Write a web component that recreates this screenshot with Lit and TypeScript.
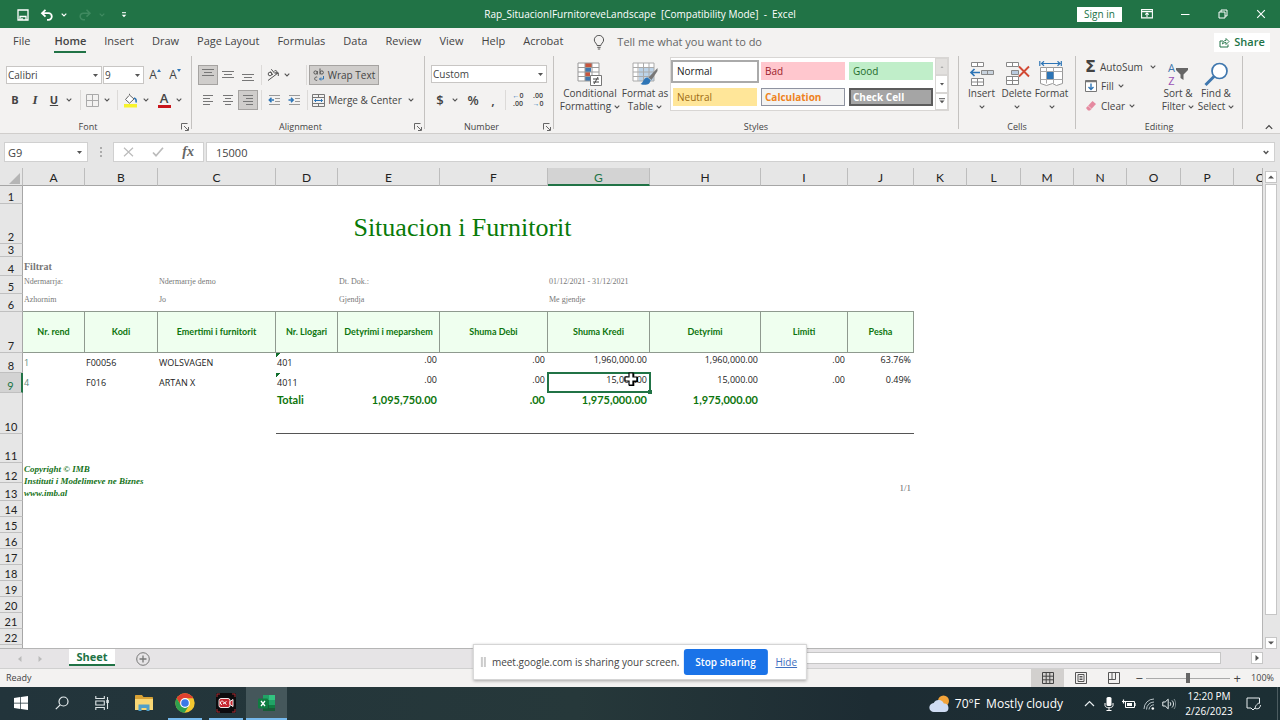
import { LitElement, html, svg, css, nothing } from "lit";
import { customElement, state } from "lit/decorators.js";
import { classMap } from "lit/directives/class-map.js";

const icon = (w: number, h: number, body: unknown) => html`
  <svg width=${w} height=${h} viewBox="0 0 ${w} ${h}" fill="none" aria-hidden="true">${body}</svg>`;

const chevron = () => icon(6, 4, svg`<path d="M.7 .7 3 3 5.3 .7" stroke="#555" stroke-width="1.1"/>`);
const caret = () => icon(5, 3, svg`<path d="M0 0h5L2.5 3z" fill="#555"/>`);

const lines = (rows: [number, number, number][], color = "#777") =>
  icon(14, 14, rows.map(([x, y, w]) => svg`<path d="M${x} ${y}.5h${w}" stroke=${color}/>`));

const launcher = () => icon(8, 8, svg`<path d="M.5 6.500V.5H6.500M3 3l4 4M7.500 4v3.500H4" stroke="#666"/>`);

const I = {
  save: () => icon(12, 12, svg`<path d="M1 1h10v10H1z" stroke="#fff" stroke-width="1.300"/><path d="M3 11V7.500h6V11M5 9v2" stroke="#fff" stroke-width="1.300"/>`),
  undo: () => icon(14, 12, svg`<path d="M5.500 .8 2 4.200l3.500 3.400M2.200 4.200H8.500a3.300 3.300 0 0 1 0 6.600H7" stroke="#fff" stroke-width="1.800"/>`),
  redo: () => icon(14, 12, svg`<path d="M8.500 .8 12 4.200 8.500 7.600M11.800 4.200H5.500a3.300 3.300 0 0 0 0 6.600H7" stroke="#3f8a60" stroke-width="1.500"/>`),
  whiteChevron: (c: string) => icon(6, 4, svg`<path d="M.7 .7 3 3 5.300 .7" stroke=${c} stroke-width="1.200"/>`),
  customize: () => icon(6, 6, svg`<path d="M1 .7h4" stroke="#fff"/><path d="M.7 2.800h4.600L3 5.300z" fill="#fff"/>`),
  ribbonMode: () => icon(12, 10, svg`<path d="M.6 .6h10.800v8.300H.6zM.6 2.600h10.800" stroke="#fff" stroke-width="1.100"/><path d="M6 8V4M4.200 5.600 6 3.900l1.800 1.700" stroke="#fff" stroke-width="1.100"/>`),
  minimize: () => icon(10, 10, svg`<path d="M1 5.500h8.500" stroke="#fff"/>`),
  restore: () => icon(10, 10, svg`<path d="M1 3h6v6H1z" stroke="#fff"/><path d="M3 3V1h6v6H7" stroke="#fff"/>`),
  close: () => icon(10, 10, svg`<path d="m1.200 1.200 7.600 7.600m0-7.600L1.200 8.800" stroke="#fff" stroke-width="1.100"/>`),
  bulb: () => icon(12, 15, svg`<path d="M4 10.500c0-2-2.700-2.800-2.700-5.500a4.600 4.600 0 0 1 9.300 0c0 2.700-2.700 3.500-2.700 5.500zM4.300 12.300h3.400M4.800 14h2.400" stroke="#555"/>`),
  share: () => icon(11, 11, svg`<path d="M4 4H1v6h8V7.500" stroke="#217346"/><path d="M3.500 7C3.800 4.500 5 3.500 7 3.500V1.500l3 3-3 3V5.500C5.500 5.500 4.500 6 3.500 7z" stroke="#217346" stroke-width=".9"/>`),
  border: () => icon(13, 13, svg`<path d="M.5 .5h12v12H.5zM6.500 .5v12M.5 6.500h12" stroke="#aaa"/>`),
  fillColor: () => icon(15, 15, svg`<path d="M6 2.500 2.500 6.500l4 3.700 4.500-4.200-4.500-4V.8" stroke="#666" fill="#fff"/><path d="M11 5c2 .5 2.500 2 2 4.500" stroke="#2e75b6" stroke-width="1.600"/><path d="M1 11h13v3.500H1z" fill="#f7f32c"/>`),
  orient: () => icon(14, 14, svg`<g stroke="#555"><circle cx="4" cy="6" r="1.800"/><path d="m4.500 3.500 2.200 3.500M5.300 1.200l3.500 4.300M8 3.600a1.600 1.600 0 1 1 1.500 2.200M2 12.500 12 5M12.300 8V4.800H9"/></g>`),
  wrap: () => icon(12, 14, svg`<g stroke="#555"><circle cx="2.500" cy="4.500" r="1.600"/><path d="M4.300 3v3.500M7 .5v6M4.200 9.200a1.700 1.700 0 1 0 0 3"/><circle cx="8.800" cy="4.500" r="1.600"/></g><path d="M10.500 8v3H6.500M8 9.500 6.500 11 8 12.500" stroke="#2e75b6"/>`),
  merge: () => icon(13, 13, svg`<path d="M.5 .5h12v12H.5zM.5 3.500h12M.5 9.500h12M6.500 .5v3M6.500 9.500v3" stroke="#777"/><path d="M2.500 6.500h8M4 5 2.500 6.500 4 8M9 5l1.500 1.500L9 8" stroke="#2e75b6"/>`),
  indent: (dir: number) => icon(13, 12, svg`<path d="M1 1.500h11M7 4.500h5M7 7.500h5M1 10.500h11" stroke="#999"/><path d=${dir < 0 ? "M6 6H1.500M3.500 3.800 1.300 6l2.200 2.200" : "M.5 6H5M3 3.800 5.200 6 3 8.200"} stroke="#2e75b6" stroke-width="1.500"/>`),
  cond: () => icon(26, 25, svg`<path d="M1 1h21v18H1z" fill="#fff"/><path d="M8 1h7v4.500H8z" fill="#c8553d"/><path d="M8 5.500h6V10H8z" fill="#3f77ae"/><path d="M8 10h5v4.500H8z" fill="#c8553d"/><path d="M8 14.500h5V19H8z" fill="#3f77ae"/><path d="M1 1h21v18H1zM1 5.500h21M1 10h21M1 14.500h21M8 1v18M15 1v18" stroke="#999"/><path d="M13.500 13.500h11v10h-11z" fill="#fff" stroke="#777"/><path d="M16 17h6M16 20h6M21 15l-4 7" stroke="#444"/>`),
  table: () => icon(27, 25, svg`<path d="M1 1h21v18H1z" fill="#fff"/><path d="M7 6h15v13H7z" fill="#bcd3e8"/><path d="M1 1h21v18H1zM1 5.500h21M1 10h21M1 14.500h21M6 1v18M11.500 1v18M17 1v18" stroke="#aaa"/><path d="m25.500 6-9 9.500 3 2.500 6-9z" fill="#777"/><path d="M15.500 15.500c-4 0-3.500 4.500-7 6.500 5 2 10 .5 10-4z" fill="#2e75b6"/>`),
  insert: () => icon(26, 26, svg`<g stroke="#888" fill="#fff"><path d="M2.500 1.500h12v4h-12zM8.500 1.500v4M2.500 17.500h12v7h-12zM8.500 17.500v7M2.500 21h12"/><path d="M12.500 9.500h12v4h-12zM18.500 9.500v4" fill="#c9d3dd"/></g><path d="M11 11.500H2M5.500 8 2 11.500 5.500 15" stroke="#2e75b6" stroke-width="1.700"/>`),
  remove: () => icon(26, 26, svg`<g stroke="#888" fill="#fff"><path d="M2.500 1.500h12v4h-12zM8.500 1.500v4M2.500 15.500h12v8h-12zM8.500 15.500v8M2.500 19.500h12"/><path d="M7.500 9.500h7v4h-7z" fill="#b9cbe0"/></g><path d="m15 5.500 10 10M25 5.500l-10 10" stroke="#d24a35" stroke-width="1.900"/>`),
  format: () => icon(26, 26, svg`<path d="M2 2.500h19M5 .3 2.500 2.500 5 4.700M18.500 .3 21 2.500l-2.500 2.200M.8 0v5M22.300 0v5" stroke="#2e75b6" stroke-width="1.200"/><path d="M1.500 6.500h22v16l-6 2-4-2-6 2-6-2z" fill="#fff" stroke="#999"/><path d="M1.500 10.500h22M1.500 18.500h22M7.500 6.500v16M14.500 6.500v16" stroke="#aaa"/><path d="M8 11h6.500v7H8z" fill="#2e75b6"/>`),
  fillDown: () => icon(12, 12, svg`<path d="M.5 .5h11v11H.5z" fill="#fff" stroke="#777"/><path d="M.5 1.500h11" stroke="#777" stroke-width="1.500"/><path d="M6 3.500v6M3.500 7 6 9.500 8.500 7" stroke="#2e75b6" stroke-width="1.400"/>`),
  eraser: () => icon(12, 12, svg`<path d="m1 8 6.500-7L11 4 5 10.500H3z" fill="#e58aa0"/><path d="m3 5.800 3.800 3.300" stroke="#f5c5d0"/>`),
  funnel: () => icon(12, 13, svg`<path d="M0 0h12v2L7.500 6.500V12l-3-2V6.500L0 2z" fill="#666"/>`),
  magnifier: () => icon(25, 25, svg`<circle cx="15.500" cy="9" r="7.500" fill="#fff" stroke="#3f77ae" stroke-width="1.700"/><path d="m10 14.500-8.500 8.500" stroke="#3f77ae" stroke-width="3"/>`),
  collapse: () => icon(8, 6, svg`<path d="m.8 4.800 3.200-3.300 3.200 3.300" stroke="#444" stroke-width="1.200"/>`),
  cancel: () => icon(11, 10, svg`<path d="m1 .8 9 8.400M10 .8 1 9.200" stroke="#bbb" stroke-width="1.200"/>`),
  confirm: () => icon(12, 10, svg`<path d="m1 5.500 3 3.200L11 .8" stroke="#bbb" stroke-width="1.700"/>`),
  dots: () => icon(2, 10, svg`<path d="M0 1h2M0 5h2M0 9h2" stroke="#999" stroke-width="1.500"/>`),
  corner: () => icon(11, 11, svg`<path d="M11 0v11H0z" fill="#b5b5b5"/>`),
  plusCircle: () => icon(14, 14, svg`<circle cx="7" cy="7" r="6.300" stroke="#777"/><path d="M7 3.500v7M3.500 7h7" stroke="#777" stroke-width="1.300"/>`),
  tri: (d: string, c = "#555") => icon(6, 6, svg`<path d=${d} fill=${c}/>`),
  viewNormal: () => icon(12, 12, svg`<path d="M.5 .5h11v11H.5zM.5 4.200h11M.5 7.800h11M4.200 .5v11M7.800 .5v11" stroke="#444"/>`),
  viewPage: () => icon(12, 12, svg`<path d="M.5 .5h11v11H.5zM3 2.500h6v7H3zM4.500 4.500h3M4.500 6h3M4.500 7.500h3" stroke="#555"/>`),
  viewBreak: () => icon(12, 12, svg`<path d="M.5 11.500V.5h11v11zM.5 7.500h7v-7M4 .5v7" stroke="#555"/>`),
  windows: () => icon(14, 14, svg`<path d="m0 2 6.300-.9v5.600H0zM7 1l7-1v6.700H7zM0 7.400h6.300V13L0 12.100zM7 7.400h7V14l-7-1z" fill="#fff"/>`),
  search: () => icon(14, 14, svg`<circle cx="8.500" cy="5.500" r="4.500" stroke="#e8eef0" stroke-width="1.200"/><path d="M5.200 8.800.8 13.200" stroke="#e8eef0" stroke-width="1.200"/>`),
  taskView: () => icon(15, 14, svg`<path d="M.8 0v2.500h8.500V0M.8 5h8.500v4H.8zM.8 14v-2.500h8.500V14M12.500 1v12" stroke="#dfe6e8" stroke-width="1.100"/><path d="M11.300 4h2.500v3h-2.500z" fill="#dfe6e8"/>`),
  folder: () => icon(20, 18, svg`<path d="M1 2c0-.6.400-1 1-1h6l1.500 2H18c.6 0 1 .4 1 1v12H1z" fill="#d9a336"/><path d="M1 5h18v11H1z" fill="#f8d775"/><path d="M4.500 17v-6.500h11V17h-3v-3h-5v3z" fill="#4f9fc9"/>`),
  chrome: () => icon(20, 20, svg`<circle cx="10" cy="10" r="9.700" fill="#f3c730"/><path d="M1.600 5.200A9.700 9.700 0 0 1 18.400 5.200H10L6 12.500z" fill="#e0402f"/><path d="M1.600 5.200A9.700 9.700 0 0 0 9.500 19.700L14 12.500 6 12.500z" fill="#2fa04f"/><circle cx="10" cy="10" r="4.900" fill="#fff"/><circle cx="10" cy="10" r="3.800" fill="#3b78e7"/>`),
  recorder: () => icon(20, 20, svg`<rect width="20" height="20" rx="2" fill="#0d0b0d"/><path d="M1 4V1h3M16 1h3v3M19 16v3h-3M4 19H1v-3" stroke="#a92d33"/><rect x="3" y="5.500" width="11" height="9" rx="2" fill="#c7262f" stroke="#fff" stroke-width=".9"/><path d="m14 8.500 3-2v7l-3-2z" fill="#c7262f" stroke="#fff" stroke-width=".9"/><path d="M6 11.500a1.700 1.700 0 1 1 1.500-2.500l3 2.500M7 11l3.500-2.500" stroke="#fff"/>`),
  excel: () => icon(18, 18, svg`<path d="M5 1h12v16H5z" fill="#21a366"/><path d="M11 1h6v5h-6z" fill="#33c481"/><path d="M5 6h6v5H5z" fill="#107c41"/><path d="M5 11h12v6H5z" fill="#185c37"/><path d="M11 11h6v3h-6z" fill="#107c41"/><rect y="4.500" width="10" height="10" rx="1" fill="#107c41"/><path d="m3 7 4 5M7 7l-4 5" stroke="#fff" stroke-width="1.300"/>`),
  cloud: () => icon(22, 18, svg`<circle cx="14.500" cy="6" r="5.500" fill="#f2a33a"/><path d="M5 17a4.500 4.500 0 0 1-.3-9A5.500 5.500 0 0 1 14.800 8.500 4.300 4.300 0 0 1 16 17z" fill="#cfdcf3"/>`),
  up: () => icon(11, 7, svg`<path d="m1 6 4.500-4.500L10 6" stroke="#e8eef0" stroke-width="1.200"/>`),
  mic: () => icon(10, 14, svg`<rect x="2.500" width="5" height="9" rx="1.500" fill="#fff"/><path d="M1 6v2.500c0 3 8 3 8 0V6M5 11v2.500M2.500 13.500h5" stroke="#fff"/>`),
  battery: () => icon(14, 10, svg`<path d="M3.500 2.500h9v6h-9z" stroke="#fff"/><path d="M5 4h5v3H5z" fill="#fff"/><path d="M13 4v3M0 2.500h4M1.500 .5v4" stroke="#fff" stroke-width="1.200"/>`),
  wifi: () => icon(12, 12, svg`<path d="M1 11A10 10 0 0 1 11 1M3.500 11.500A7.500 7.500 0 0 1 11 4M6 11.500A5 5 0 0 1 11 6.800" stroke="#b9c4c8"/><circle cx="9.800" cy="10.500" r="1.300" fill="#fff"/>`),
  volume: () => icon(14, 12, svg`<path d="M.8 4h2.400L6.200 1.200v9.600L3.200 8H.8z" stroke="#e8eef0"/><path d="M8 4.200c1 1 1 2.600 0 3.600M10 2.500c2 2 2 5 0 7" stroke="#e8eef0"/><path d="M12 1c2.200 3 2.200 7 0 10" stroke="#7f8d91"/>`),
  notif: () => icon(15, 14, svg`<path d="M1 1h12.500v10H9l-2 2-2-2H1z" stroke="#e8eef0"/><path d="M13 6c-2 1-4.500 3.500-3.500 5.500 2.500 1 5-1 5-3.500" stroke="#e8eef0" fill="#1e3035"/>`),
  cursor: () => icon(14, 14, svg`<path d="M5 1h4v4h4v4H9v4H5V9H1V5h4z" fill="#fff" stroke="#000" stroke-width="1.200"/><path d="M9.600 1.500v3.200M13.400 5v4.600H9.600v4H5" stroke="#000" stroke-width="1.400"/>`),
};

const COLS: [string, number][] = [
  ["A", 62], ["B", 73], ["C", 118], ["D", 62], ["E", 102], ["F", 108], ["G", 102], ["H", 111], ["I", 87],
  ["J", 66], ["K", 53], ["L", 54], ["M", 53], ["N", 53], ["O", 54], ["P", 53], ["Q", 54],
];
const HEIGHTS = [18, 40, 13, 19, 18, 18, 41, 20, 20, 41, 29, 20, 18, 16, 16, 16, 16, 16, 16, 16, 16, 16];

interface Cell { t?: unknown; k?: string; span?: number; rows?: number; }
const heads = ["Nr. rend", "Kodi", "Emertimi i furnitorit", "Nr. Llogari", "Detyrimi i meparshem",
  "Shuma Debi", "Shuma Kredi", "Detyrimi", "Limiti", "Pesha"];
const num = (t: string): Cell => ({ t, k: "num" });
const txt = (t: string, k = "txt"): Cell => ({ t, k });
const blank = (n: number, k = ""): Cell => ({ span: n, k });

const ROWS: Record<number, Cell[]> = {
  2: [{ t: "Situacion i Furnitorit", k: "title", span: 10 }, blank(7)],
  4: [txt("Filtrat", "filter-head"), blank(16)],
  5: [txt("Ndermarrja:", "filter"), blank(1), txt("Ndermarrje demo", "filter"), blank(1), txt("Dt. Dok.:", "filter"),
    blank(1), { t: "01/12/2021 - 31/12/2021", k: "filter", span: 2 }, blank(9)],
  6: [txt("Azhornim", "filter"), blank(1), txt("Jo", "filter"), blank(1), txt("Gjendja", "filter"), blank(1),
    txt("Me gjendje", "filter"), blank(10)],
  7: [...heads.map((t) => ({ t, k: "head" })), blank(7)],
  8: [txt("1", "txt idx"), txt("F00056"), txt("WOLSVAGEN"), txt("401", "txt flag"), num(".00"), num(".00"),
    num("1,960,000.00"), num("1,960,000.00"), num(".00"), num("63.76%"), blank(7)],
  9: [txt("4", "txt idx"), txt("F016"), txt("ARTAN X"), txt("4011", "txt flag"), num(".00"), num(".00"),
    { t: "15,000.00", k: "num active" }, num("15,000.00"), num(".00"), num("0.49%"), blank(7)],
  10: [blank(3), txt("Totali", "total first"), txt("1,095,750.00", "total"), txt(".00", "total"), txt("1,975,000.00", "total"),
    txt("1,975,000.00", "total"), blank(2, "rule"), blank(7)],
  12: [{ t: html`Copyright © IMB<br />Instituti i Modelimeve ne Biznes<br />www.imb.al`, k: "copy", span: 3, rows: 2 }, blank(14)],
  13: [blank(6), txt("1/1", "page"), blank(7)],
};

@customElement("app-root")
export class AppRoot extends LitElement {
  @state() private sharing = true;

  static styles = css`
    :host { display: grid; grid-template-rows: auto auto auto auto minmax(0, 1fr) auto auto auto; height: 100vh; min-width: 0;
      position: relative; overflow: hidden; background: #e6e6e6; color: #444; font: 11px/14px "Open Sans", "Noto Sans", sans-serif; }
    * { box-sizing: border-box; }
    svg { display: block; flex: none; }
    button, input, select { font: inherit; color: inherit; border: 0; background: none; padding: 0; margin: 0; border-radius: 0; }
    button { display: flex; align-items: center; justify-content: center; white-space: nowrap; }
    a { color: inherit; text-decoration: none; }

    .title-bar { display: grid; grid-template-columns: 1fr auto 1fr; align-items: center; height: 28px; background: #217346; color: #fff; font-size: 10px; }
    .quick { display: flex; align-items: center; gap: 7px; padding: 2px 0 0 17px; }
    .quick .wide { margin-left: 4px; }
    .quick .far { margin-left: 9px; }
    .doc-name { white-space: pre; line-height: 12px; }
    .window-controls { display: flex; justify-content: flex-end; align-items: center; }
    .window-controls button { width: 38px; height: 28px; }
    .window-controls .sign-in { width: 45px; height: 15px; background: #fff; color: #217346; margin-right: 6px; }

    .tabs { display: flex; align-items: center; height: 28px; background: #f3f2f1; padding: 0 10px 0 13px; font-size: 11px; }
    .tabs a { height: 22px; line-height: 20px; margin-right: 18px; }
    .tabs a:first-child { margin-right: 24px; }
    .tabs .home { font-weight: 600; border-bottom: 2px solid #217346; }
    .tell { display: flex; align-items: center; gap: 12px; margin-left: 12px; line-height: 20px; color: #666; }
    .share { margin-left: auto; background: #fff; color: #217346; font-weight: 600; height: 19px; width: 56px; gap: 4px; }

    .ribbon { display: grid; grid-template-columns: 192px 233px 129px minmax(0, 1fr) 117px 167px 37px; height: 78px; background: #f3f2f1;
      border-bottom: 1px solid #d0cecc; font-size: 10px; }
    .group { position: relative; display: grid; grid-template-rows: minmax(0, 1fr) 13px; padding: 1px 1px 0 0;
      background: linear-gradient(#c4c2c0, #c4c2c0) right top / 1px 73px no-repeat; }
    .group-label { text-align: center; font-size: 9px; line-height: 14px; }
    .with-launch .group-label { padding-right: 15px; }
    .launch { position: absolute; right: 3px; bottom: 2px; width: 9px; height: 9px; }
    .two-rows { display: grid; grid-template-rows: 18px 20px; row-gap: 7px; padding: 8px 0 0 6px; align-content: start; }
    .row { display: grid; align-items: center; justify-items: center; }
    .font-top { grid-template-columns: 96px 41px 20px 18px; column-gap: 1px; }
    .font-bottom { grid-template-columns: 18px 22px 16px 14px 8px 16px 14px 6px 20px 12px 24px 6px; }
    .align-top { grid-template-columns: 20px 20px 20px 6px 18px 10px 11px 6px 70px; }
    .align-bottom { grid-template-columns: 20px 20px 20px 6px 20px 20px 6px 94px 14px; }
    .number-bottom { grid-template-columns: 18px 12px 24px 16px 8px 18px 22px; }
    .row button { min-width: 100%; height: 20px; }
    .row .pressed { background: #cfcdcb; border: 1px solid #a5a3a1; }
    .sep { width: 1px; height: 20px; background: #dcdad8; }
    .combo { position: relative; display: block; width: 100%; height: 18px; background: #fff; border: 1px solid #c8c6c4; }
    .combo select { appearance: none; width: 100%; height: 16px; padding-left: 1px; line-height: 16px; outline: 0; }
    .combo svg { position: absolute; right: 3px; top: 7px; pointer-events: none; }
    .number-top { width: 116px; }
    .glyph { font-size: 13px; font-weight: 600; }
    .bold { font-size: 11px; font-weight: 700; } .ital { font: italic 700 13px "Liberation Serif", serif; } .under { text-decoration: underline; }
    .font-step { align-items: flex-start; font-size: 12px; line-height: 20px; }
    .font-step svg { margin-top: 4px; }
    .font-color { flex-direction: column; font-weight: 600; font-size: 13px; line-height: 11px; }
    .font-color i { width: 13px; height: 3px; background: #c9141b; margin-top: 1px; }
    .text-button { gap: 3px; }
    .decimals { flex-direction: column; font-size: 7px; line-height: 8px; font-weight: 600; }
    .decimals b { color: #2e75b6; }

    .styles { display: grid; grid-template-columns: 60px 50px auto; padding: 0 0 0 6px; justify-content: start; }
    .big { flex-direction: column; justify-content: flex-start; line-height: 13px; padding-top: 4px; }
    .big .glyph-box { height: 26px; display: flex; align-items: center; justify-content: center; gap: 1px; }
    .big .cap { display: flex; align-items: center; gap: 3px; }
    .big .solo { height: 13px; }
    .gallery { display: grid; grid-template-columns: 88px 88px 88px 13px; grid-template-rows: 26px 26px; background: #fff; border: 1px solid #d8d6d4; height: 54px; }
    .gallery .style { width: 84px; height: 18px; justify-self: center; align-self: center; justify-content: flex-start; padding-left: 4px; }
    .gallery .normal { width: 88px; height: 23px; color: #222; border: 2px solid #aaa; }
    .bad { background: #ffc7ce; color: #9c1c2c; } .good { background: #c0eec9; color: #1f6b2b; }
    .neutral { background: #ffe699; color: #9c6a12; }
    .gallery .calc { background: #f2f2f2; border: 1px solid #8f93a0; color: #ee8322; font-weight: 700; padding-left: 3px; }
    .gallery .check { background: #a5a5a5; border: 2px solid #5c5c5c; color: #fff; font-weight: 700; padding-left: 2px; }
    .spin { grid-column: 4; grid-row: 1 / 3; display: grid; grid-template-rows: 1fr 1fr 1fr; }
    .spin button { border: 1px solid #d8d6d4; width: 13px; }
    .spin .off { background: #e2e0de; }

    .cells { display: grid; grid-template-columns: 35px 35px 35px; padding-left: 5px; }
    .editing { display: grid; grid-template-columns: 74px 38px 38px; padding-left: 9px; }
    .edit-list { display: grid; grid-template-rows: 19px 20px 19px; justify-items: start; }
    .edit-list button { gap: 4px; }
    .edit-list .sum { width: 71px; justify-content: flex-start; }
    .edit-list .sum svg { margin-left: auto; }
    .edit-list .sigma { font: 700 16px/16px "DejaVu Sans", sans-serif; }
    .az { display: flex; flex-direction: column; font-size: 11px; line-height: 13px; color: #3f77ae; }
    .az b { font-weight: 400; color: #9a4fb5; }
    .collapse { align-self: end; justify-self: end; width: 22px; height: 12px; }

    .formula-bar { display: grid; grid-template-columns: 84px 25px 91px minmax(0, 1fr); padding: 8px 5px 6px 4px; height: 34px; background: #e6e6e6; }
    .box { position: relative; display: flex; align-items: center; background: #fff; border: 1px solid #d0d0d0; height: 20px; }
    .box input { width: 100%; height: 18px; outline: 0; }
    .box > svg { position: absolute; right: 5px; }
    .name-box { padding-left: 3px; }
    .dots { display: grid; place-items: center; }
    .fx { justify-content: space-around; }
    .fx button { width: 24px; height: 18px; }
    .fx .fn { font: italic 700 14px "Liberation Serif", serif; color: #666; }
    .formula { margin-left: 2px; padding-left: 9px; }

    .sheet { display: grid; grid-template-columns: minmax(0, 1fr) 17px; min-height: 0; }
    .view { position: relative; overflow: hidden; background: #fff; border-right: 1px solid #b5b5b5; border-bottom: 1px solid #b5b5b5; }
    table { border-collapse: separate; border-spacing: 0; table-layout: fixed; width: 0; color: #222; }
    th, td { padding: 0; font-weight: 400; white-space: nowrap; }
    .col, .row-no { background: #e6e6e6; font: 12px/11px Lato, "Open Sans", sans-serif; text-align: center; color: #222; }
    .col { height: 18px; border-right: 1px solid #bdbdbd; border-bottom: 1px solid #a6a6a6; padding-top: 2px; }
    .corner { padding: 3px 0 0 9px; }
    .row-no { font-size: 11px; vertical-align: bottom; border-right: 1px solid #a6a6a6; border-bottom: 1px solid #c0c0c0; padding-bottom: 1px; }
    .hot { background: #d3d3d3; color: #217346; }
    .col.hot { border-bottom: 2px solid #217346; }
    .row-no.hot { border-right: 2px solid #217346; }
    .title { font: 26px/32px "Liberation Serif", serif; color: #087a08; text-align: center; padding: 7px 12px 0 0; }
    .filter-head { font: 700 10px/12px "Liberation Serif", serif; color: #777; padding-left: 1px; }
    .filter { font: 8px/11px "Liberation Serif", serif; color: #777; padding-left: 1px; vertical-align: top; }
    .head { background: #efffef; color: #0d750d; font: 700 9px/12px Lato, "Open Sans", sans-serif; text-align: center;
      border: solid #8f9a8f; border-width: 0 1px 1px 0; box-shadow: 0 -1px #8f9a8f; }
    .txt { font-size: 9px; line-height: 12px; padding-left: 1px; }
    .idx { color: #5d8a7c; }
    .flag { background: linear-gradient(135deg, #12702e 3px, transparent 3px); }
    .num { font-size: 9px; line-height: 12px; text-align: right; vertical-align: top; padding: 1px 3px 0 0; }
    .active { position: relative; }
    .active::before { content: ""; position: absolute; inset: -1px -1px 0 -1px; border: 2px solid #217346; }
    .active::after { content: ""; position: absolute; right: -2px; bottom: -1px; width: 4px; height: 4px; background: #217346; }
    .pointer { position: absolute; right: 12px; top: -1px; }
    .total { font: 700 11px/14px Lato, "Open Sans", sans-serif; color: #0d750d; text-align: right; vertical-align: top; padding-right: 3px; }
    .first { text-align: left; padding-left: 1px; }
    .total, .rule { border-bottom: 1px solid #555; }
    .copy { font: italic 700 9px/12px "Liberation Serif", serif; color: #16731a; vertical-align: top; padding-left: 1px; }
    .page { font: 9px/11px "Liberation Serif", serif; color: #666; text-align: right; vertical-align: top; padding-right: 3px; }
    .vscroll { display: grid; grid-template-rows: 13px minmax(0, 1fr) 12px; padding: 3px 3px 0 2px; background: #e6e6e6; }
    .sb { background: #fff; border: 1px solid #c6c6c6; width: 12px; height: 12px; }
    .thumb { background: #fff; border: 1px solid #c6c6c6; }
    .vscroll .thumb { margin-bottom: 22px; width: 12px; }

    .sheet-tabs { display: grid; grid-template-columns: 69px 46px 56px minmax(0, 1fr) auto; height: 20px; background: #e6e4e6; border-bottom: 1px solid #d0d0d0; }
    .nav { display: flex; justify-content: center; align-items: center; gap: 14px; padding-right: 10px; }
    .sheet-tab { height: 17px; background: #fff; color: #217346; font-weight: 700; font-size: 11px; border-bottom: 2px solid #217346; }
    .add { padding-top: 1px; }
    .hscroll { grid-column: 4 / 6; display: grid; grid-template-columns: minmax(0, 1fr) 13px; column-gap: 30px; padding: 3px 16px 4px 0; margin-left: 50%; }
    .hscroll .thumb { height: 12px; }

    .status { display: flex; align-items: center; height: 18px; background: #f3f2f1; font-size: 9px; padding: 0 6px; }
    .views { display: flex; margin-left: auto; }
    .views button { width: 33px; height: 18px; }
    .views .on { background: #d2d0ce; }
    .zoom { display: flex; align-items: center; margin-left: 2px; }
    .zoom button { width: 14px; font-size: 13px; line-height: 14px; }
    .zoom input { appearance: none; width: 84px; height: 12px; background: linear-gradient(#aaa, #aaa) center / 100% 1px no-repeat; }
    .zoom input::-webkit-slider-thumb { appearance: none; width: 4px; height: 10px; background: #666; }
    .zoom output { margin-left: 7px; }

    .taskbar { display: flex; align-items: center; height: 33px; background: linear-gradient(90deg, #22343b, #26383a 45%, #1d2c33 68%, #1c2f34); color: #fff; font-size: 12px; }
    .taskbar .app { width: 41px; height: 33px; border-bottom: 2px solid transparent; }
    .taskbar .open { background: linear-gradient(#76b9ed, #76b9ed) center bottom / 34px 2px no-repeat; background-origin: border-box; }
    .taskbar .current { background-color: #45575b; background-size: 41px 2px; }
    .weather { margin-left: auto; gap: 4px; white-space: pre; }
    .tray { display: flex; align-items: center; padding-left: 16px; }
    .tray button { width: 20px; height: 33px; }
    .clock { font-size: 10px; line-height: 15px; text-align: center; width: 60px; }
    .tray .notif { width: 28px; }
    .peek { width: 1px; height: 33px; background: #4c5c60; margin: 0 2px 0 10px; }

    .sharing { position: absolute; left: 50%; bottom: 40px; transform: translateX(-50%); display: flex; align-items: center; height: 36px; background: #fff;
      border: 1px solid #d5d5d5; box-shadow: 0 1px 3px #0005; font-size: 10px; color: #444; padding: 0 9px 0 7px; white-space: nowrap; }
    .grip { width: 5px; height: 10px; border: solid #ccc; border-width: 0 2px; margin-right: 6px; }
    .stop { margin-left: 4px; width: 84px; height: 26px; border-radius: 3px; background: #1a73e8; color: #fff; font-weight: 600; }
    .sharing a { color: #3f6fc0; text-decoration: underline; margin-left: 8px; }
  `;

  private cell(c: Cell) {
    const active = (c.k ?? "").includes("active");
    return html`<td class=${c.k ?? ""} colspan=${c.span ?? 1} rowspan=${c.rows ?? 1}>${c.t ?? nothing}${active ? html`<span class="pointer">${I.cursor()}</span>` : nothing}</td>`;
  }

  private combo(label: string, value: string) {
    return html`<label class="combo"><select aria-label=${label}><option>${value}</option></select>${caret()}</label>`;
  }

  private ribbon() {
    return html`<div class="ribbon">
      <section class="group with-launch">
        <div class="two-rows">
          <div class="row font-top">
            ${this.combo("Font", "Calibri")}${this.combo("Font size", "9")}
            <button class="font-step" aria-label="Increase font size">A${icon(4, 3, svg`<path d="M0 3h4L2 0z" fill="#2e75b6"/>`)}</button>
            <button class="font-step" aria-label="Decrease font size">A${icon(4, 3, svg`<path d="M0 0h4L2 3z" fill="#2e75b6"/>`)}</button>
          </div>
          <div class="row font-bottom">
            <button class="bold">B</button><button class="ital">I</button><button class="bold under">U</button>
            <button aria-label="Underline options">${chevron()}</button><span class="sep"></span>
            <button aria-label="Borders">${I.border()}</button><button aria-label="Border options">${chevron()}</button><span class="sep"></span>
            <button aria-label="Fill color">${I.fillColor()}</button><button aria-label="Fill options">${chevron()}</button>
            <button class="font-color" aria-label="Font color">A<i></i></button><button aria-label="Font color options">${chevron()}</button>
          </div>
        </div>
        <div class="group-label">Font</div><button class="launch" aria-label="Font settings">${launcher()}</button>
      </section>
      <section class="group with-launch">
        <div class="two-rows">
          <div class="row align-top">
            <button class="pressed" aria-label="Top align">${lines([[1, 1, 12], [3, 4, 8], [1, 7, 12]])}</button>
            <button aria-label="Middle align">${lines([[1, 3, 12], [3, 6, 8], [1, 9, 12]])}</button>
            <button aria-label="Bottom align">${lines([[1, 6, 12], [3, 9, 8], [1, 12, 12]])}</button>
            <span class="sep"></span><button aria-label="Orientation">${I.orient()}</button>
            <button aria-label="Orientation options">${chevron()}</button><span></span><span class="sep"></span>
            <button class="pressed text-button">${I.wrap()}Wrap Text</button>
          </div>
          <div class="row align-bottom">
            <button aria-label="Align left">${lines([[2, 2, 10], [2, 5, 7], [2, 8, 10], [2, 11, 7]])}</button>
            <button aria-label="Center">${lines([[2, 2, 10], [4, 5, 6], [2, 8, 10], [4, 11, 6]])}</button>
            <button class="pressed" aria-label="Align right">${lines([[2, 2, 10], [5, 5, 7], [2, 8, 10], [5, 11, 7]])}</button>
            <span class="sep"></span><button aria-label="Decrease indent">${I.indent(-1)}</button>
            <button aria-label="Increase indent">${I.indent(1)}</button><span class="sep"></span>
            <button class="text-button">${I.merge()}Merge &amp; Center</button><button aria-label="Merge options">${chevron()}</button>
          </div>
        </div>
        <div class="group-label">Alignment</div><button class="launch" aria-label="Alignment settings">${launcher()}</button>
      </section>
      <section class="group with-launch">
        <div class="two-rows">
          <div class="number-top">${this.combo("Number format", "Custom")}</div>
          <div class="row number-bottom">
            <button class="glyph">$</button><button aria-label="Currency options">${chevron()}</button>
            <button class="glyph">%</button><button class="glyph">,</button><span class="sep"></span>
            <button class="decimals" aria-label="Increase decimal"><span><b>←</b>0</span><span>.00</span></button>
            <button class="decimals" aria-label="Decrease decimal"><span>.00</span><span><b>→</b>0</span></button>
          </div>
        </div>
        <div class="group-label">Number</div><button class="launch" aria-label="Number settings">${launcher()}</button>
      </section>
      <section class="group">
        <div class="styles">
          <button class="big"><span class="glyph-box">${I.cond()}</span><span>Conditional</span><span class="cap">Formatting ${chevron()}</span></button>
          <button class="big"><span class="glyph-box">${I.table()}</span><span>Format as</span><span class="cap">Table ${chevron()}</span></button>
          <div class="gallery">
            <button class="style normal">Normal</button><button class="style bad">Bad</button><button class="style good">Good</button>
            <button class="style neutral">Neutral</button><button class="style calc">Calculation</button><button class="style check">Check Cell</button>
            <div class="spin"><button class="off" aria-label="Previous styles">${I.tri("M1.500 4h3L3 2z", "#aaa")}</button>
              <button aria-label="Next styles">${I.tri("M1 2h4L3 4.500z")}</button>
              <button aria-label="More styles">${icon(6, 6, svg`<path d="M0 .7h6" stroke="#555"/><path d="M.5 2.500h5L3 5.300z" fill="#555"/>`)}</button></div>
          </div>
        </div>
        <div class="group-label">Styles</div>
      </section>
      <section class="group">
        <div class="cells">
          ${[["Insert", I.insert()], ["Delete", I.remove()], ["Format", I.format()]].map(([t, g]) => html`
            <button class="big"><span class="glyph-box">${g}</span><span>${t}</span><span class="cap solo">${chevron()}</span></button>`)}
        </div>
        <div class="group-label">Cells</div>
      </section>
      <section class="group">
        <div class="editing">
          <div class="edit-list">
            <button class="sum"><span class="sigma">Σ</span>AutoSum${chevron()}</button>
            <button>${I.fillDown()}Fill ${chevron()}</button><button>${I.eraser()}Clear ${chevron()}</button>
          </div>
          <button class="big"><span class="glyph-box"><span class="az">A<b>Z</b></span>${I.funnel()}</span><span>Sort &amp;</span><span class="cap">Filter ${chevron()}</span></button>
          <button class="big"><span class="glyph-box">${I.magnifier()}</span><span>Find &amp;</span><span class="cap">Select ${chevron()}</span></button>
        </div>
        <div class="group-label">Editing</div>
      </section>
      <button class="collapse" aria-label="Collapse ribbon">${I.collapse()}</button>
    </div>`;
  }

  private grid() {
    return html`<table>
      <colgroup><col width="23" />${COLS.map(([, w]) => html`<col width=${w} />`)}</colgroup>
      <thead><tr><th class="col corner">${I.corner()}</th>
        ${COLS.map(([n]) => html`<th scope="col" class=${classMap({ col: true, hot: n === "G" })}>${n}</th>`)}</tr></thead>
      <tbody>${HEIGHTS.map((h, i) => {
        const n = i + 1;
        const cells = ROWS[n] ?? [blank(17)];
        return html`<tr style="height:${h}px"><th scope="row" class=${classMap({ "row-no": true, hot: n === 9 })}>${n}</th>
          ${cells.map((c) => this.cell(c))}</tr>`;
      })}
        <tr><th class="row-no">&nbsp;</th><td colspan="17"></td></tr>
      </tbody>
    </table>`;
  }

  render() {
    return html`
      <header class="title-bar">
        <div class="quick">
          <button aria-label="Save">${I.save()}</button>
          <button class="wide" aria-label="Undo">${I.undo()}</button><button aria-label="Undo history">${I.whiteChevron("#fff")}</button>
          <button class="wide" aria-label="Redo">${I.redo()}</button><button aria-label="Redo history">${I.whiteChevron("#3f8a60")}</button>
          <button class="far" aria-label="Customize toolbar">${I.customize()}</button>
        </div>
        <div class="doc-name">Rap_SituacionIFurnitoreveLandscape  [Compatibility Mode]  -  Excel</div>
        <div class="window-controls">
          <button class="sign-in">Sign in</button>
          <button aria-label="Ribbon display options">${I.ribbonMode()}</button><button aria-label="Minimize">${I.minimize()}</button>
          <button aria-label="Restore">${I.restore()}</button><button aria-label="Close">${I.close()}</button>
        </div>
      </header>
      <nav class="tabs">
        ${["File", "Home", "Insert", "Draw", "Page Layout", "Formulas", "Data", "Review", "View", "Help", "Acrobat"].map((t) => html`
          <a href="#" class=${classMap({ home: t === "Home" })}>${t}</a>`)}
        <button class="tell">${I.bulb()}Tell me what you want to do</button>
        <button class="share">${I.share()}Share</button>
      </nav>
      ${this.ribbon()}
      <div class="formula-bar">
        <div class="box name-box"><input aria-label="Name box" .value=${"G9"} />${caret()}</div>
        <div class="dots">${I.dots()}</div>
        <div class="box fx"><button aria-label="Cancel">${I.cancel()}</button><button aria-label="Enter">${I.confirm()}</button><button class="fn">fx</button></div>
        <div class="box formula"><input aria-label="Formula" .value=${"15000"} />${icon(6, 5, svg`<path d="M.7 1 3 3.500 5.300 1" stroke="#555" stroke-width="1.500"/>`)}</div>
      </div>
      <main class="sheet">
        <div class="view">${this.grid()}</div>
        <div class="vscroll"><button class="sb" aria-label="Scroll up">${I.tri("M0 4.500h6L3 1.500z")}</button><div class="thumb"></div>
          <button class="sb" aria-label="Scroll down">${I.tri("M0 1.500h6L3 4.500z")}</button></div>
      </main>
      <div class="sheet-tabs">
        <div class="nav">${I.tri("M4.500 0v6L1 3z", "#bbb")}${I.tri("M1.500 0v6L5 3z", "#bbb")}</div>
        <button class="sheet-tab">Sheet</button>
        <button class="add" aria-label="New sheet">${I.plusCircle()}</button>
        <div class="hscroll"><div class="thumb"></div><button class="sb" aria-label="Scroll right">${I.tri("M1.500 0v6L5 3z")}</button></div>
      </div>
      <div class="status">
        <span>Ready</span>
        <div class="views"><button class="on" aria-label="Normal view">${I.viewNormal()}</button><button aria-label="Page layout view">${I.viewPage()}</button>
          <button aria-label="Page break preview">${I.viewBreak()}</button></div>
        <div class="zoom"><button aria-label="Zoom out">−</button><input type="range" min="0" max="200" value="100" aria-label="Zoom" />
          <button aria-label="Zoom in">+</button><output>100%</output></div>
      </div>
      <footer class="taskbar">
        <button class="app" aria-label="Start">${I.windows()}</button><button class="app" aria-label="Search">${I.search()}</button>
        <button class="app" aria-label="Task view">${I.taskView()}</button><button class="app" aria-label="File Explorer">${I.folder()}</button>
        <button class="app open" aria-label="Chrome">${I.chrome()}</button><button class="app open" aria-label="Recorder">${I.recorder()}</button>
        <button class="app open current" aria-label="Excel">${I.excel()}</button>
        <button class="weather">${I.cloud()}<span>70°F  Mostly cloudy</span></button>
        <div class="tray">
          <button aria-label="Hidden icons">${I.up()}</button><button aria-label="Microphone">${I.mic()}</button><button aria-label="Battery">${I.battery()}</button>
          <button aria-label="Network">${I.wifi()}</button><button aria-label="Volume">${I.volume()}</button>
          <div class="clock">12:20 PM<br />2/26/2023</div>
          <button class="notif" aria-label="Notifications">${I.notif()}</button><span class="peek"></span>
        </div>
      </footer>
      ${this.sharing ? html`<div class="sharing" role="dialog" aria-label="Screen sharing"><span class="grip"></span><span>meet.google.com is sharing your screen.</span>
        <button class="stop">Stop sharing</button><a href="#" @click=${(e: Event) => { e.preventDefault(); this.sharing = false; }}>Hide</a></div>` : nothing}
    `;
  }
}
